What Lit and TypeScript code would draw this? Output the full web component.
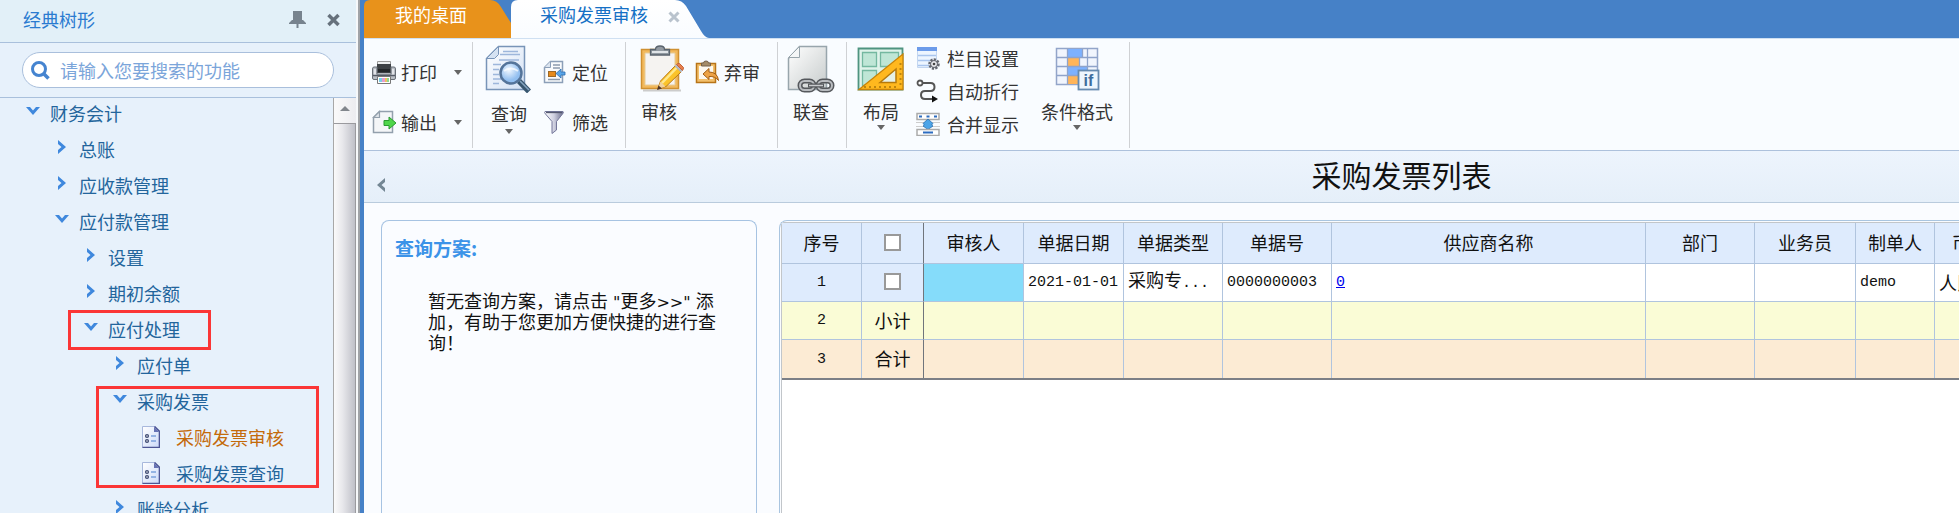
import { LitElement, html, css, svg, nothing, TemplateResult } from "lit";
import { customElement } from "lit/decorators.js";
import { classMap } from "lit/directives/class-map.js";

interface TreeNode {
  label: string;
  open?: boolean;
  leaf?: boolean;
  active?: boolean;
  mark?: "row" | "group";
  children?: TreeNode[];
}

const TREE: TreeNode[] = [
  {
    label: "财务会计",
    open: true,
    children: [
      { label: "总账" },
      { label: "应收款管理" },
      {
        label: "应付款管理",
        open: true,
        children: [
          { label: "设置" },
          { label: "期初余额" },
          {
            label: "应付处理",
            open: true,
            mark: "row",
            children: [
              { label: "应付单" },
              {
                label: "采购发票",
                open: true,
                mark: "group",
                children: [
                  { label: "采购发票审核", leaf: true, active: true },
                  { label: "采购发票查询", leaf: true },
                ],
              },
              { label: "账龄分析" },
            ],
          },
        ],
      },
    ],
  },
];

const COLUMNS = [
  { title: "序号", width: 80 },
  { title: "", width: 62 },
  { title: "审核人", width: 100 },
  { title: "单据日期", width: 100 },
  { title: "单据类型", width: 99 },
  { title: "单据号", width: 109 },
  { title: "供应商名称", width: 314 },
  { title: "部门", width: 109 },
  { title: "业务员", width: 101 },
  { title: "制单人", width: 79 },
  { title: "币种", width: 71 },
];

const chevronDown = html`<svg class="chev" width="14" height="14" viewBox="0 0 14 14"><path fill="#3f88dd" d="M0 3h4l3 3.500L10 3h4l-7 8z" /></svg>`;
const chevronRight = html`<svg class="chev" width="14" height="14" viewBox="0 0 14 14"><path fill="#3f88dd" d="M3 0v4l3.500 3L3 10v4l8-7z" /></svg>`;
const leafIcon = html`<svg class="leaf" width="18" height="22" viewBox="0 0 18 22">
  <defs><linearGradient id="lg" x1="0" y1="0" x2="1" y2="1"><stop offset="0" stop-color="#fff" /><stop offset="1" stop-color="#ccdaf8" /></linearGradient></defs>
  <path d="M.5 .5h12l5 5v16H.5z" fill="url(#lg)" stroke="#a8b8dc" />
  <path d="M12.500 .5l5 5v16H.5" fill="none" stroke="#4d5594" stroke-width="1.600" />
  <path d="M12 1v5h5z" fill="#6672b4" />
  <g fill="#fff" stroke="#3c4870" stroke-width="1.300"><circle cx="5" cy="10" r="1.400" /><circle cx="5" cy="15" r="1.400" /></g>
  <path d="M9 10h5M9 15h5" stroke="#7ba1dc" stroke-width="1.600" />
</svg>`;

const printer = svg`
  <path d="M5.500 1.500h13v7h-13z" fill="#eceeef" stroke="#999" />
  <rect x="5" y="4" width="14" height="9" fill="#3c4044" />
  <path d="M6 9h12v3H6z" fill="#23272a" />
  <path d="M2 7h3v7h14V7h3q1.500 0 1.500 2v9q0 1.500-1.500 1.500H2Q.5 19.500 .5 18V9Q.5 7 2 7z" fill="#b9bec5" stroke="#686e76" />
  <path d="M3 9v6M21 9v6" stroke="#eef0f4" stroke-width="1.500" />
  <path d="M1 15.500h22" stroke="#555b66" stroke-width="1.500" />
  <path d="M5.500 16.500h13v7h-13z" fill="#fff" stroke="#777" />
  <path d="M7 18h3v4H7z" fill="#7bd0e8" /><path d="M10 18h3v4h-3z" fill="#e79bd0" /><path d="M13 18h2v4h-2z" fill="#f0c060" /><path d="M15 18h2v4h-2z" fill="#8fd890" />`;
const exportIcon = svg`
  <path d="M7.500 1.500h13v21h-19V7.500z" fill="#f4f6f8" stroke="#93a0ad" stroke-width="1.500" />
  <path d="M7.500 1.500v6h-6z" fill="#dfe5ea" stroke="#93a0ad" stroke-width="1.200" />
  <path d="M12 10.500h5V7l7 6-7 6v-3.500h-5z" fill="#4fd64a" stroke="#2a9a30" />`;
const locate = svg`
  <path d="M7.500 1.500h12v21h-18V7.500z" fill="#fafbfd" stroke="#8c9fb8" stroke-width="1.500" />
  <path d="M7.500 1.500v6h-6" fill="#dbe4ef" stroke="#8c9fb8" />
  <path d="M10 5h7M10 8h7M5 19.500h12" stroke="#8c9bad" stroke-width="1.300" />
  <rect x="5.500" y="11.500" width="7" height="5" fill="#e68a1c" stroke="#9d6a28" />
  <path d="M13 13.500l5-4.500v3h4v3h-4v3z" fill="#5aa6e8" stroke="#2b6cb0" stroke-width=".8" />`;
const funnel = svg`
  <defs><linearGradient id="fn"><stop offset="0" stop-color="#fff" /><stop offset=".5" stop-color="#cfd0e0" /><stop offset="1" stop-color="#686b8a" /></linearGradient></defs>
  <path d="M2 1.500h18q1 1-.5 2.500L13.500 11.500v8.500L9 23.500v-12L2.500 4Q1 2.500 2 1.500z" fill="url(#fn)" stroke="#74779a" />
  <path d="M3 2.500h16" stroke="#54586f" stroke-width="1.300" />`;
const unaudit = svg`
  <path d="M1.500 3.500h19v19h-19z" fill="#f3c06c" stroke="#b87418" stroke-width="1.500" />
  <path d="M4 6h14v13H4z" fill="#fdf8ee" />
  <path d="M6.500 3h2q0-2 2.500-2t2.500 2h2v3h-9z" fill="#a58c68" stroke="#74604a" />
  <path d="M8 14l6-5.500V12q8.500 0 9.500 8.500-3.500-4.500-9.500-4v3z" fill="#eda244" stroke="#a25e14" />`;
const searchDoc = svg`
  <defs><linearGradient id="sd" x1="0" y1="0" x2="1" y2="1"><stop offset="0" stop-color="#fff" /><stop offset="1" stop-color="#d3e1f5" /></linearGradient>
  <radialGradient id="ln" cx=".4" cy=".35"><stop offset="0" stop-color="#f3f9ff" /><stop offset="1" stop-color="#92bff0" /></radialGradient></defs>
  <path d="M13.500 1.500h26v43h-38v-31z" fill="url(#sd)" stroke="#7894b8" stroke-width="1.500" />
  <path d="M13.500 1.500v8l-4 4h-8z" fill="#d5e2f2" stroke="#7894b8" />
  <path d="M18 6.500h15M15 9.500h20M14 15h20M8 19.500h8M8 24.500h6M8 29.500h6M8 34h8M8 38.500h6" stroke="#9db6db" stroke-width="1.500" />
  <path d="M34 36l10 10.500" stroke="#38566f" stroke-width="5.500" />
  <path d="M35 36l9 9" stroke="#86a5c2" stroke-width="1.500" />
  <circle cx="26" cy="28" r="10.500" fill="url(#ln)" stroke="#54749a" stroke-width="2.500" />
  <path d="M19 26q7-5 14 0" fill="none" stroke="#fff" stroke-width="2" opacity=".7" />`;
const clipboard = svg`
  <path d="M4 45.500h38" stroke="#ccc" stroke-width="2" />
  <path d="M2.500 4.500h37v39h-37z" fill="#f2b95c" stroke="#d09030" stroke-width="1.500" />
  <path d="M6 8h30v32H6z" fill="#f5f3f1" stroke="#e6cb98" />
  <path d="M11.500 4.500h5q0-3.500 4.500-3.500t4.500 3.500h5V10h-19z" fill="#929aa2" stroke="#59636d" stroke-width="1.300" />
  <path d="M13 7h16" stroke="#e0e4e8" stroke-width="2" />
  <path d="M19 43.500l2.500-7.500L36 21l6 6L27 41.500z" fill="#fbc32a" stroke="#b97914" />
  <path d="M23 38l14.500-15" stroke="#ffe88c" stroke-width="2.500" />
  <path d="M35.500 21l6.500 6.500 2-2.500-6.500-6z" fill="#b5bac2" />
  <path d="M37.500 19.500q1.500-1.500 3-1l4 4q0 1.500-1 3z" fill="#e8804e" stroke="#c46238" />
  <path d="M19 44l2.500-7.500 5 5z" fill="#f0d2a0" /><path d="M18 45l1.500-4.500 3.500 3z" fill="#4c3428" />`;
const linkDoc = svg`
  <defs><linearGradient id="ld" x1="0" y1="0" x2="1" y2="1"><stop offset="0" stop-color="#fff" /><stop offset="1" stop-color="#c6cbcb" /></linearGradient></defs>
  <path d="M12.500 1.500h27v43h-38v-31z" fill="url(#ld)" stroke="#98a5ac" stroke-width="1.500" />
  <path d="M12.500 1.500v11h-11z" fill="#f4f6f7" stroke="#98a5ac" />
  <g fill="none" stroke="#55585c" stroke-width="5"><rect x="13" y="36" width="14" height="9" rx="4.500" /><rect x="31" y="36" width="14" height="9" rx="4.500" /></g>
  <g fill="none" stroke="#b9bcc0" stroke-width="2"><rect x="13" y="36" width="14" height="9" rx="4.500" /><rect x="31" y="36" width="14" height="9" rx="4.500" /></g>
  <path d="M21 40.500h16" stroke="#55585c" stroke-width="4" /><path d="M22 40.500h14" stroke="#c8cbce" stroke-width="1.500" />`;
const layoutIcon = svg`
  <path d="M1.500 3.500h44v41h-44z" fill="#dff3ea" stroke="#4f9480" stroke-width="1.800" />
  <g fill="#bfe6d6" stroke="#74b8a0" stroke-width="1.300"><path d="M5.500 7.500h14v14h-14zM23.500 7.500h18v14h-18zM5.500 25.500h14v15h-14z" /></g>
  <path d="M2 44.500L46 9v35.500z" fill="#ffb81e" stroke="#c98308" stroke-width="1.300" />
  <path d="M23 37.500l16-13.500v13.500z" fill="#e6f1e6" stroke="#b67a0c" stroke-width="1.500" />
  <path d="M8 43v-2M13 43v-2M18 43v-2M23 43v-2M28 43v-2M33 43v-2M38 43v-2M44.500 39h-2M44.500 34h-2M44.500 29h-2M44.500 24h-2M44.500 19h-2" stroke="#7c5200" />`;
const columnsIcon = svg`
  <path d="M1.500 1.500h19v20h-19z" fill="#edf5ff" stroke="#c3d6f0" />
  <path d="M1 1h20v4H1z" fill="#6c9bea" />
  <path d="M2 9.500h18M2 14.500h12M2 19.500h11" stroke="#a9c5ee" stroke-width="1.300" />
  <circle cx="18" cy="18" r="4.500" fill="#e8e8ec" stroke="#63666f" stroke-width="2.500" stroke-dasharray="2.200 1.200" />
  <circle cx="18" cy="18" r="3.500" fill="none" stroke="#63666f" /><circle cx="18" cy="18" r="1.300" fill="#444" />`;
const wrapIcon = svg`
  <circle cx="4" cy="4" r="2.500" fill="#fff" stroke="#555" stroke-width="1.800" />
  <path d="M7 4h7.500q4 0 4 4t-4 4H9q-4 0-4 4t4 4h7" fill="none" stroke="#555" stroke-width="2" />
  <path d="M16 16.500L22 20l-6 3.500z" fill="#111" />`;
const mergeIcon = svg`
  <path d="M1 1.500h22v6H1z" fill="#fff" stroke="#aaa" stroke-width="1.500" /><path d="M3 4.500h3M10.500 4.500h3M18 4.500h3" stroke="#2d6cc0" stroke-width="2" />
  <path d="M0 10.500h24M0 14.500h24" stroke="#ccc" />
  <path d="M12 7l5 4.500-1.500 1.500 1.500 1-5 3.500-5-3.500 1.500-1L7 11.500z" fill="#4ba4e8" stroke="#2a6fb0" stroke-width=".8" />
  <path d="M1 17.500h22v6H1z" fill="#fff" stroke="#aaa" stroke-width="1.500" /><path d="M7 20.500h10" stroke="#2d6cc0" stroke-width="2" />`;
const conditionIcon = svg`
  <path d="M3.500 3.500h41v36h-41z" fill="#f1f5fd" stroke="#93a5c9" stroke-width="1.500" />
  <path d="M14 4h16v8H14zM14 22h20v8H14z" fill="#7db1ff" /><path d="M14 13h12v8H14zM14 31h12v8H14z" fill="#ffb55a" />
  <path d="M4 12.500h40M4 21.500h40M4 30.500h40M14.500 4v35M34.500 4v35M29.500 4v9M26.500 13v8" stroke="#8fa3ca" stroke-width="1.300" fill="none" />
  <rect x="25.500" y="25.500" width="20" height="19" fill="#eef6fd" stroke="#668bb0" stroke-width="1.800" />
  <text x="35.500" y="41" text-anchor="middle" font-family="Liberation Sans, sans-serif" font-size="16" font-weight="bold" fill="#3f6d9c">if</text>`;

const caret = html`<svg class="caret" width="8" height="5" viewBox="0 0 8 5"><path d="M0 0h8L4 5z" fill="#666" /></svg>`;

@customElement("app-root")
export class AppRoot extends LitElement {
  static styles = css`
    :host {
      display: flex;
      height: 100vh;
      overflow: hidden;
      background: #4681c7;
      color: #333;
      font: 18px/20px "Noto Sans CJK SC", sans-serif;
    }
    *, *::after { box-sizing: border-box; }
    button { font: inherit; color: inherit; background: none; border: 0; padding: 0; margin: 0; text-align: left; cursor: pointer; white-space: nowrap; }
    ul { list-style: none; margin: 0; padding: 0; }
    svg { flex: none; display: block; }

    .side { flex: none; width: 360px; margin-right: 4px; display: flex; flex-direction: column; background: #e7f1fb; border-right: 2px solid #a0a3a7; box-shadow: inset -2px 0 #f6f8fa; padding-right: 2px; }
    .side-head { display: flex; align-items: center; height: 43px; padding: 0 15px 4px 23px; background: #e2f0f8; border-bottom: 1px solid #a9c0dc; }
    .side-title { flex: 1; margin: 0; font: inherit; color: #2a7bd0; }
    .side-tools { display: flex; gap: 20px; }
    .search { display: flex; align-items: center; gap: 10px; height: 36px; margin: 9px 22px 9px 22px; padding: 0 8px; background: #fff; border: 1px solid #a9bfdc; border-radius: 18px; }
    .search input { flex: 1; min-width: 0; padding: 0; border: 0; outline: 0; background: none; font: inherit; color: #333; }
    .search input::placeholder { color: #7ba5da; opacity: 1; }
    .tree-area { flex: 1; min-height: 0; display: flex; border-top: 1px solid #a9c0dc; }
    .tree { flex: 1; overflow: hidden; padding-left: 26px; color: #23659c; }
    .tree ul { padding-left: 29px; }
    .node { position: relative; }
    .row { position: relative; display: flex; align-items: center; gap: 10px; height: 36px; padding-bottom: 6px; }
    .chev { margin-bottom: 4px; }
    .row.is-leaf { gap: 16px; }
    .row.active { color: #c46a0a; }
    .row.mark::after, .node.mark::after { content: ""; position: absolute; border: 3px solid #fb3636; pointer-events: none; }
    .row.mark::after { left: -16px; top: -4px; width: 143px; height: 40px; }
    .node.mark::after { left: -17px; top: 0; width: 223px; bottom: 6px; }
    .scroll { flex: none; width: 23px; display: flex; flex-direction: column; border-left: 1px solid #a8a8a8; background: #eee; }
    .scroll-up { display: grid; place-items: center; height: 25px; padding-bottom: 4px; background: linear-gradient(90deg, #fafafa, #ececf0); }
    .scroll-thumb { flex: 1; border: 1px solid #9a9a9e; border-left: 0; border-bottom: 0; background: linear-gradient(90deg, #fafafa, #e8e8ec 40%, #bfc0c8); }

    .main { flex: 1; min-width: 0; display: flex; flex-direction: column; background: #fafcff; }
    .tabs { flex: none; display: flex; height: 38px; background: #4681c7; color: #fff; }
    .tab { display: flex; align-items: flex-start; gap: 20px; height: 38px; padding: 4px 0 0 29px; }
    .tab.home { width: 147px; padding-left: 31px; background: #e8921b; clip-path: path("M0 6Q0 0 6 0H126Q133 0 137 7L147 23V38H0z"); }
    .tab.current { width: 198px; background: linear-gradient(#fff, #f9fcff); color: #1570c5; clip-path: path("M0 7Q0 0 7 0H164Q171 0 175 6L190 31Q194 38 198 38H0z"); }
    .tab-close { padding-top: 4px; }
    .ribbon { flex: none; display: flex; height: 113px; padding: 3px 0 2px; background: #f9fcff; border-top: 1px solid #cfe0f2; border-bottom: 1px solid #adc1dc; }
    .group { display: flex; align-items: flex-start; border-right: 1px solid #cfd1d4; padding: 0 10px 0 8px; }
    .stack { display: flex; flex-direction: column; padding-top: 5px; }
    .stack.three { padding-top: 0; }
    .small { display: flex; align-items: center; gap: 5px; height: 50px; }
    .three .small { height: 33px; padding-bottom: 2px; gap: 7px; }
    .small .caret { margin-left: 12px; }
    .big { display: flex; flex-direction: column; align-items: center; padding-top: 3px; }
    .big .label { padding-top: 8px; }
    .big .caret { margin-top: 4px; }
    .big.loose .label { padding-top: 10px; }
    .big.loose .caret { margin-top: 6px; }
    .g-query { gap: 10px; padding: 0 17px 0 12px; }
    .g-audit { gap: 8px; padding: 0 17px 0 13px; }
    .g-audit .big { align-items: flex-start; }
    .g-audit .label { padding-left: 2px; }
    .g-link { padding: 0 11px 0 9px; }
    .g-layout { padding: 0 16px 0 10px; gap: 11px; }
    .g-layout .big:last-child { margin-left: 11px; }

    .title-bar { flex: none; display: flex; align-items: center; height: 52px; padding: 0 0 0 13px; background: linear-gradient(#edf4fd, #e5eff9); border-bottom: 1px solid #b9cbdd; }
    .collapse { padding-top: 16px; }
    .title { flex: 1; margin: 0; padding: 0 0 6px 458px; text-align: center; font-size: 30px; line-height: 44px; font-weight: 400; color: #111; }
    .work { flex: 1; min-height: 0; display: flex; gap: 22px; padding: 17px 0 0 17px; }
    .query { flex: none; width: 376px; padding: 16px 40px 16px 13px; border: 1px solid #a6c3e2; border-bottom: 0; border-radius: 8px 8px 0 0; color: #111; }
    .query-title { margin: 0; font-size: 19px; line-height: 22px; font-weight: 700; color: #3c93e8; }
    .query-text { margin: 31px 0 0 33px; line-height: 21px; }
    .ascii { font: 16px/16px "DejaVu Sans", sans-serif; }
    .grid { flex: 1; min-width: 0; overflow: hidden; padding: 1px 0 0 1px; border: solid #a9c5e0; border-width: 1px 0 0 1px; border-radius: 8px 0 0 0; }
    .grid-inner { height: 100%; overflow: hidden; border: solid #c2c6ca; border-width: 1px 0 0 1px; background: #fff; }
    table { table-layout: fixed; width: 1224px; border-collapse: separate; border-spacing: 0; border-bottom: 2px solid #7c7f86; color: #111; }
    th, td { height: 38px; padding: 0 4px 2px; border: solid #b0c4de; border-width: 0 1px 1px 0; font-weight: 400; text-align: left; white-space: nowrap; overflow: hidden; }
    th { height: 41px; background: #deebfd; text-align: center; }
    tr:last-child td { border-bottom: 0; }
    .center { text-align: center; }
    .head { background: #deebfd; }
    .edge { border-right-color: #70757c; }
    .cursor { background: #85dcfa; }
    .subtotal td { background: #fafcd6; }
    .total td { background: #fcebd4; }
    .mono { font: 15px/20px "Liberation Mono", monospace; }
    td.mono { padding: 1px 4px 0; }
    a { color: #0000ee; }
    .tick { appearance: none; display: block; width: 17px; height: 17px; margin: 0 auto; border: 2px solid #999; background: #fff; }
  `;

  private icon(art: TemplateResult, size: number) {
    return html`<svg width=${size} height=${size} viewBox="0 0 ${size} ${size}">${art}</svg>`;
  }

  private small(label: string, art: TemplateResult, menu = false) {
    return html`<button class="small">${this.icon(art, 24)}<span>${label}</span>${menu ? caret : nothing}</button>`;
  }

  private big(label: string, art: TemplateResult, menu = false, loose = false) {
    return html`<button class=${classMap({ big: true, loose })}>${this.icon(art, 48)}<span class="label">${label}</span>${menu ? caret : nothing}</button>`;
  }

  private node(n: TreeNode): TemplateResult {
    const row = { row: true, "is-leaf": !!n.leaf, active: !!n.active, mark: n.mark === "row" };
    return html`<li class=${classMap({ node: true, mark: n.mark === "group" })}>
      <button class=${classMap(row)}>${n.leaf ? leafIcon : n.open ? chevronDown : chevronRight}<span>${n.label}</span></button>
      ${n.children ? html`<ul>${n.children.map((c) => this.node(c))}</ul>` : nothing}
    </li>`;
  }

  private emptyCells(count: number) {
    return Array.from({ length: count }, () => html`<td></td>`);
  }

  render() {
    return html`
      <aside class="side">
        <header class="side-head">
          <h2 class="side-title">经典树形</h2>
          <div class="side-tools">
            <button aria-label="固定"><svg width="17" height="17" viewBox="0 0 17 17"><path d="M4 0h9v9h1l3 3v1H9.500v4h-2v-4H0v-1l3-3h1z" fill="#77838e" /></svg></button>
            <button aria-label="关闭面板"><svg width="15" height="17" viewBox="0 0 15 17"><path d="M2.500 4l10 10M12.500 4l-10 10" stroke="#66717c" stroke-width="3.500" /></svg></button>
          </div>
        </header>
        <label class="search">
          <svg width="19" height="19" viewBox="0 0 19 19"><circle cx="8" cy="8" r="6.500" fill="none" stroke="#4584d0" stroke-width="3" /><path d="M12.500 12.500l5 5" stroke="#4584d0" stroke-width="3.500" /></svg>
          <input type="text" placeholder="请输入您要搜索的功能" aria-label="搜索功能" />
        </label>
        <div class="tree-area">
          <ul class="tree">${TREE.map((n) => this.node(n))}</ul>
          <div class="scroll">
            <button class="scroll-up" aria-label="向上滚动"><svg width="10" height="5" viewBox="0 0 10 5"><path d="M5 0l5 5H0z" fill="#81868c" /></svg></button>
            <div class="scroll-thumb"></div>
          </div>
        </div>
      </aside>

      <main class="main">
        <nav class="tabs">
          <button class="tab home">我的桌面</button>
          <div class="tab current">
            <span>采购发票审核</span>
            <button class="tab-close" aria-label="关闭"><svg width="12" height="18" viewBox="0 0 12 18"><path d="M1.500 4.500l9 9M10.500 4.500l-9 9" stroke="#b9c3cd" stroke-width="3" /></svg></button>
          </div>
        </nav>

        <div class="ribbon">
          <div class="group">
            <div class="stack">${this.small("打印", printer, true)}${this.small("输出", exportIcon, true)}</div>
          </div>
          <div class="group g-query">
            ${this.big("查询", searchDoc, true, true)}
            <div class="stack">${this.small("定位", locate)}${this.small("筛选", funnel)}</div>
          </div>
          <div class="group g-audit">
            ${this.big("审核", clipboard)}
            <div class="stack">${this.small("弃审", unaudit)}</div>
          </div>
          <div class="group g-link">${this.big("联查", linkDoc)}</div>
          <div class="group g-layout">
            ${this.big("布局", layoutIcon, true)}
            <div class="stack three">
              ${this.small("栏目设置", columnsIcon)}${this.small("自动折行", wrapIcon)}${this.small("合并显示", mergeIcon)}
            </div>
            ${this.big("条件格式", conditionIcon, true)}
          </div>
        </div>

        <div class="title-bar">
          <button class="collapse" aria-label="收起"><svg width="9" height="14" viewBox="0 0 9 14"><path d="M8 0v4L4.500 7 8 10v4L0 7z" fill="#748794" /></svg></button>
          <h1 class="title">采购发票列表</h1>
        </div>

        <div class="work">
          <section class="query">
            <h2 class="query-title">查询方案:</h2>
            <p class="query-text">暂无查询方案，请点击<span class="ascii"> "</span>更多<span class="ascii">&gt;&gt;" </span>添加，有助于您更加方便快捷的进行查询！</p>
          </section>
          <section class="grid">
            <div class="grid-inner">
              <table>
                <colgroup>${COLUMNS.map((c) => html`<col style="width:${c.width}px" />`)}</colgroup>
                <thead>
                  <tr>
                    ${COLUMNS.map((c, i) => html`<th class=${i === 1 ? "edge" : ""}>${c.title || html`<input class="tick" type="checkbox" aria-label="全选" />`}</th>`)}
                  </tr>
                </thead>
                <tbody>
                  <tr>
                    <td class="head center mono">1</td>
                    <td class="head edge"><input class="tick" type="checkbox" aria-label="选择第1行" /></td>
                    <td class="cursor"></td>
                    <td class="mono">2021-01-01</td>
                    <td>采购专<span class="mono">...</span></td>
                    <td class="mono">0000000003</td>
                    <td class="mono"><a href="#">0</a></td>
                    <td></td>
                    <td></td>
                    <td class="mono">demo</td>
                    <td>人民币</td>
                  </tr>
                  <tr class="subtotal">
                    <td class="center mono">2</td>
                    <td class="center edge">小计</td>
                    ${this.emptyCells(9)}
                  </tr>
                  <tr class="total">
                    <td class="center mono">3</td>
                    <td class="center edge">合计</td>
                    ${this.emptyCells(9)}
                  </tr>
                </tbody>
              </table>
            </div>
          </section>
        </div>
      </main>
    `;
  }
}
